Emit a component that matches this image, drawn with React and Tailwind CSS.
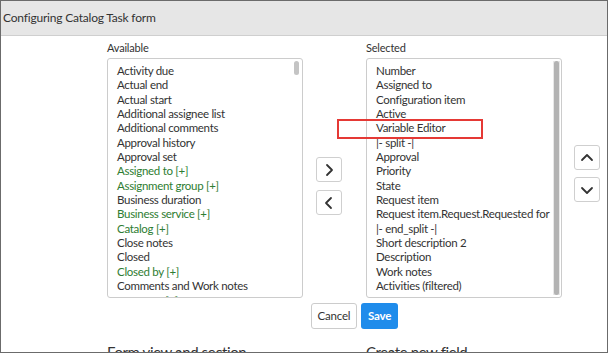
import React from 'react';

const font = { fontFamily: 'Lato, "Open Sans", sans-serif' };

const available = [
  { label: 'Activity due' },
  { label: 'Actual end' },
  { label: 'Actual start' },
  { label: 'Additional assignee list' },
  { label: 'Additional comments' },
  { label: 'Approval history' },
  { label: 'Approval set' },
  { label: 'Assigned to [+]', ref: true },
  { label: 'Assignment group [+]', ref: true },
  { label: 'Business duration' },
  { label: 'Business service [+]', ref: true },
  { label: 'Catalog [+]', ref: true },
  { label: 'Close notes' },
  { label: 'Closed' },
  { label: 'Closed by [+]', ref: true },
  { label: 'Comments and Work notes' },
  { label: 'Company [+]', ref: true },
];

const selected = [
  'Number',
  'Assigned to',
  'Configuration item',
  'Active',
  'Variable Editor',
  '|- split -|',
  'Approval',
  'Priority',
  'State',
  'Request item',
  'Request item.Request.Requested for',
  '|- end_split -|',
  'Short description 2',
  'Description',
  'Work notes',
  'Activities (filtered)',
];

const Chevron = ({ dir }) => {
  const paths = {
    right: 'M6 3l5 5-5 5',
    left: 'M10 3L5 8l5 5',
    up: 'M3 10l5-5 5 5',
    down: 'M3 6l5 5 5-5',
  };
  return (
    <svg width="16" height="16" viewBox="0 0 16 16" fill="none" stroke="#333" strokeWidth="1.8" strokeLinecap="round" strokeLinejoin="round">
      <path d={paths[dir]} />
    </svg>
  );
};

const IconButton = ({ dir }) => (
  <button className="w-[26px] h-[25px] flex items-center justify-center bg-white border border-[#cfcfcf] rounded-[3px]">
    <Chevron dir={dir} />
  </button>
);

const App = () => {
  return (
    <div className="w-[608px] h-[353px] overflow-hidden bg-white border border-[#6b6b6b] flex flex-col text-[#333]" style={font}>
      <div className="h-[35px] shrink-0 bg-[#e6e6e6] border-b border-[#cfcfcf] flex items-center pl-[2px] text-[12px] tracking-[-0.2px]">
        Configuring Catalog Task form
      </div>

      <div className="flex pl-[106px] pt-[4px]">
        <div className="w-[196px] flex flex-col">
          <div className="text-[11px] tracking-[-0.2px] h-[18px] leading-[14px] pt-[1px]">Available</div>
          <div className="h-[240px] border border-[#cccccc] rounded-[3px] flex overflow-hidden">
            <div className="flex-1 min-w-0 pl-[9px] pt-[5px] text-[11.5px] tracking-[-0.3px] leading-[14.35px]">
              {available.map((item) => (
                <div key={item.label} className={item.ref ? 'text-[#2e7d32]' : 'text-[#333]'}>
                  {item.label}
                </div>
              ))}
            </div>
            <div className="w-[8px] shrink-0 pt-[2px] pr-[2px]">
              <div className="w-[5px] h-[14px] rounded-full bg-[#c4c4c4]" />
            </div>
          </div>
        </div>

        <div className="ml-[13px] mt-[117px] flex flex-col gap-[8px]">
          <IconButton dir="right" />
          <IconButton dir="left" />
        </div>

        <div className="ml-[24px] w-[196px] flex flex-col">
          <div className="text-[11px] tracking-[-0.2px] h-[18px] leading-[14px] pt-[1px]">Selected</div>
          <div className="h-[240px] border border-[#cccccc] rounded-[3px] flex">
            <div className="flex-1 min-w-0 pl-[9px] pt-[5px] text-[11.5px] tracking-[-0.3px] leading-[14.35px] relative">
              {selected.map((item) => (
                <div key={item} className="whitespace-nowrap">{item}</div>
              ))}
              <div className="absolute left-[-30px] top-[60px] w-[146px] h-[20px] border-2 border-[#e53935]" />
            </div>
            <div className="w-[7px] shrink-0 my-[2px] mr-[1px] bg-[#e8e8e8] flex justify-center">
              <div className="w-[5px] h-full rounded-full bg-[#b3b3b3]" />
            </div>
          </div>
        </div>

        <div className="ml-[12px] mt-[105px] flex flex-col gap-[7px]">
          <IconButton dir="up" />
          <IconButton dir="down" />
        </div>
      </div>

      <div className="flex pl-[310px] pt-[5px] gap-[4px]">
        <button className="h-[26px] w-[46px] bg-white border border-[#cccccc] rounded-[3px] text-[11.5px] tracking-[-0.2px] text-[#333]">
          Cancel
        </button>
        <button className="h-[26px] w-[37px] bg-[#1f8ceb] rounded-[3px] text-[11.5px] tracking-[-0.2px] font-bold text-white">
          Save
        </button>
      </div>

      <div className="flex pl-[106px] pt-[12px] text-[15px] tracking-[-0.4px] text-[#333] whitespace-nowrap">
        <div className="w-[259px]">Form view and section</div>
        <div>Create new field</div>
      </div>
    </div>
  );
};

export default App;
